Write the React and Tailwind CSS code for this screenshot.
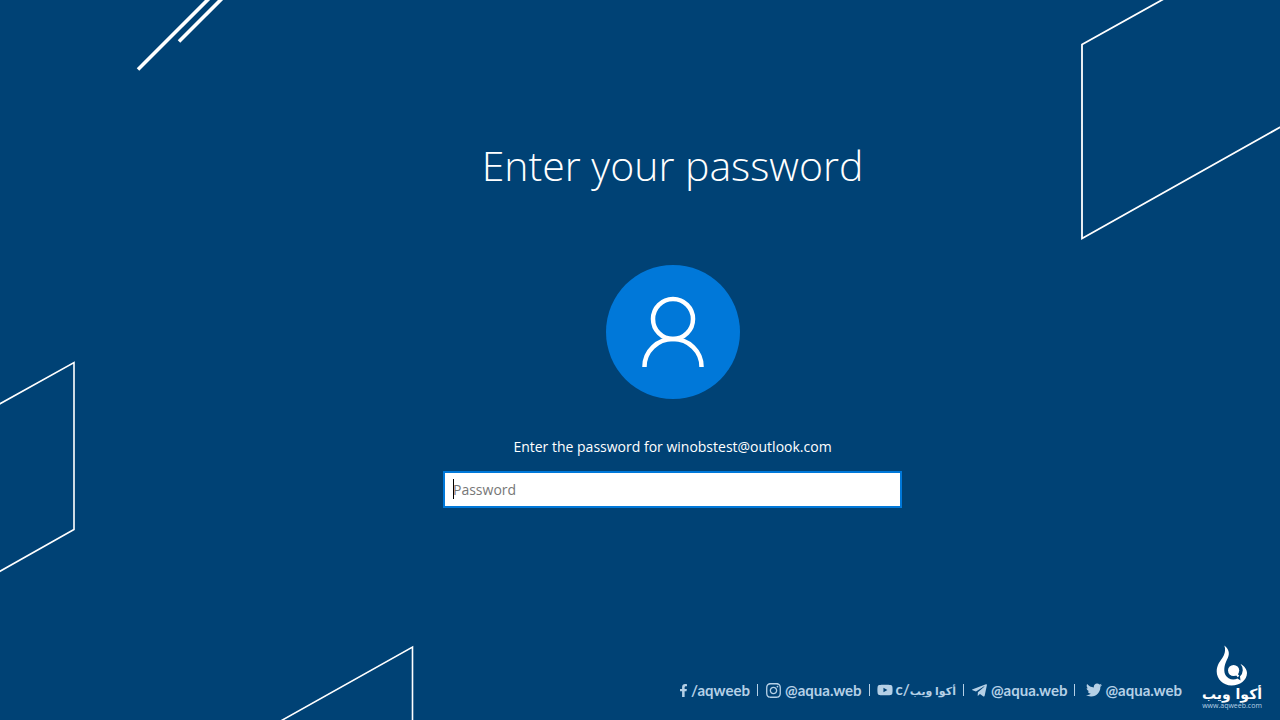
import { FaFacebookF, FaInstagram, FaYoutube, FaTelegramPlane, FaTwitter } from 'react-icons/fa';

function Backdrop() {
  return (
    <div className="pointer-events-none absolute inset-0" aria-hidden="true">
      <svg className="absolute top-0 left-[130px]" width="100" height="76" fill="none" stroke="#fff">
        <path d="M8 69.500L80 -2.500" strokeWidth="3.600" />
        <path d="M49 41.500L93 -2.500" strokeWidth="3.600" />
      </svg>
      <svg className="absolute top-0 right-0" width="200" height="242" fill="none" stroke="#fff" strokeWidth="1.800">
        <path d="M90 -4.500L2 44.500V238.500L204 125" />
      </svg>
      <svg className="absolute bottom-[146px] left-0" width="76" height="214" fill="none" stroke="#fff" strokeWidth="1.600">
        <path d="M-4 46L74 2.500V169.500L-4 213.500" />
      </svg>
      <svg className="absolute bottom-0 left-[276px]" width="140" height="76" fill="none" stroke="#fff" strokeWidth="1.600">
        <path d="M2 78.500L136.500 3V80" />
      </svg>
    </div>
  );
}

function Avatar() {
  return (
    <div className="mt-[70px] flex size-[134px] items-center justify-center rounded-full bg-[#0078d9]">
      <svg width="70" height="72" viewBox="0 0 70 72" fill="none" stroke="#fff" strokeWidth="4.500">
        <circle cx="35" cy="23" r="20" />
        <path d="M6.500 71V70.500A28.500 27.500 0 0 1 63.500 70.500V71" />
      </svg>
    </div>
  );
}

function BrandLogo() {
  return (
    <a href="#home" className="flex w-[60px] flex-col items-center text-white">
      <svg width="32" height="41" viewBox="0 0 32 41">
        <path
          fill="#fff"
          d="M8.300 .5C12.500 3.500 14 8 12 12.500C10.500 16 8.300 19 8.300 25.500A9 9 0 0 0 21.500 33.500L24.500 35.500L24 31.500A9 9 0 0 0 24.500 19C28.500 21 31 24.500 31 28C31 35 24 40.500 15.500 40.500C7 40.500.7 34 .7 26.500C.7 20.500 3.500 17 6 13.500C8.800 9.500 10 5 8.300 .5Z"
        />
        <circle cx="17.600" cy="25.500" r="5.600" fill="#fff" />
        <path d="M19.500 28L22.500 31.500" stroke="#fff" strokeWidth="2" />
      </svg>
      <span className="font-['DejaVu_Sans',sans-serif] text-sm leading-4 font-bold whitespace-nowrap" dir="rtl">أكوا ويب</span>
      <span className="font-['Open_Sans',sans-serif] text-[7px] leading-2 text-[#b5d0e6]">www.aqweeb.com</span>
    </a>
  );
}

function Divider() {
  return <span className="h-3 w-px bg-current" />;
}

function Footer() {
  return (
    <footer className="relative mt-auto flex items-end justify-end gap-5 pr-[18px] pb-2.5">
      <nav className="mb-[9px] flex items-center gap-[7px] font-['Lato','DejaVu_Sans',sans-serif] text-[15px] leading-5 font-bold text-[#b5d0e6]">
        <a href="#facebook" className="flex items-center gap-px"><FaFacebookF size={13} />/aqweeb</a>
        <Divider />
        <a href="#instagram" className="flex items-center gap-[3px]"><FaInstagram size={17} />@aqua.web</a>
        <Divider />
        <a href="#youtube" className="flex items-center gap-[3px]">
          <FaYoutube size={16} />
          <span>c/<span className="text-[11px]">أكوا ويب</span></span>
        </a>
        <Divider />
        <a href="#telegram" className="flex items-center gap-[3px]"><FaTelegramPlane size={17} />@aqua.web</a>
        <Divider />
        <a href="#twitter" className="flex items-center gap-[3px] pl-1"><FaTwitter size={16} />@aqua.web</a>
      </nav>
      <BrandLogo />
    </footer>
  );
}

export default function App() {
  return (
    <div className="relative flex min-h-screen flex-col overflow-hidden bg-[#004275] font-['Open_Sans',sans-serif] text-white">
      <Backdrop />
      <main className="relative flex flex-col items-center pt-[135px] pl-[65px]">
        <h1 className="text-[41px] leading-[60px] font-light">Enter your password</h1>
        <Avatar />
        <label htmlFor="password" className="mt-9 text-[14px] leading-6">Enter the password for winobstest@outlook.com</label>
        <div className="relative mt-3 w-full max-w-[459px]">
          <input
            id="password"
            type="password"
            placeholder="Password"
            className="block h-[37px] w-full border-2 border-[#0078d9] bg-white px-2 text-[14px] text-black outline-none placeholder:text-[#777]"
          />
          <span className="absolute top-2 left-[10px] h-5 w-px bg-black" />
        </div>
      </main>
      <Footer />
    </div>
  );
}
